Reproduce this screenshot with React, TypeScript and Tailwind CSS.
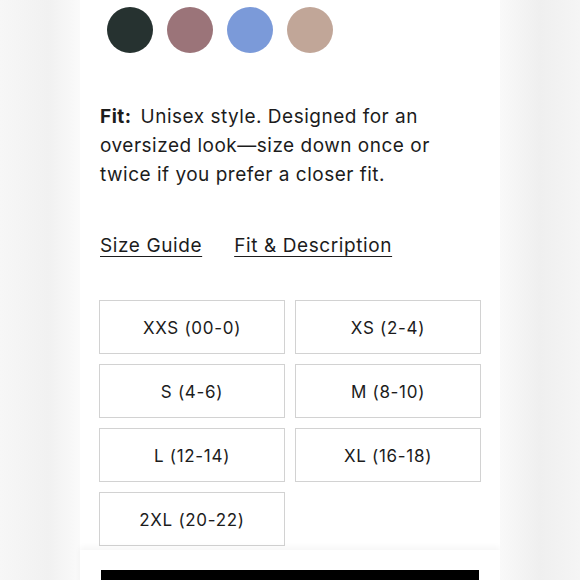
const swatches = ['#263230', '#9b7479', '#7b9ad9', '#c1a698'];

const sizes = ['XXS (00-0)', 'XS (2-4)', 'S (4-6)', 'M (8-10)', 'L (12-14)', 'XL (16-18)', '2XL (20-22)'];

export default function App() {
    return (
        <div
            className="flex h-[580px] w-[580px] overflow-hidden bg-[linear-gradient(180deg,#ffffff_0%,#f6f6f6_35%,#ebebeb_75%,#f3f3f3_100%)]"
            style={{ fontFamily: 'Inter, "Open Sans", sans-serif' }}
        >
            <div className="w-[80px] shrink-0 bg-[linear-gradient(90deg,#f7f7f7,#f1f1f1_60%,#fafafa)]" />

            {/* Center panel */}
            <div className="flex w-[420px] shrink-0 flex-col bg-white">
                <div className="flex flex-col px-[19px]">
                    {/* Colour swatches */}
                    <div className="flex gap-[14px] pl-[8px] pt-[7px]">
                        {swatches.map((c) => (
                            <div key={c} className="h-[46px] w-[46px] rounded-full" style={{ backgroundColor: c }} />
                        ))}
                    </div>

                    {/* Fit text */}
                    <p className="mt-[49px] max-w-[372px] pl-[1px] text-[19px] leading-[29px] tracking-[0.5px] text-[#1c1c1c]">
                        <span className="mr-[9px] font-bold">Fit:</span>Unisex style. Designed for an oversized look—size down once or twice if you prefer a closer fit.
                    </p>

                    {/* Links */}
                    <div className="mt-[42px] flex gap-[32px] pl-[1px] text-[19px] leading-[29px] tracking-[0.6px] text-[#1c1c1c]">
                        <a className="underline underline-offset-[4px]">Size Guide</a>
                        <a className="underline underline-offset-[4px]">Fit &amp; Description</a>
                    </div>

                    {/* Size grid */}
                    <div className="mt-[40px] grid grid-cols-2 gap-x-[10px] gap-y-[10px]">
                        {sizes.map((s) => (
                            <button
                                key={s}
                                className="flex h-[54px] items-center justify-center border-[1.5px] border-[#d2d2d2] bg-white pt-[3px] text-[17px] tracking-[0.7px] text-[#1c1c1c]"
                            >
                                {s}
                            </button>
                        ))}
                    </div>
                </div>

                {/* Sticky footer */}
                <div className="mt-[4px] flex-1 bg-white px-[21px] pt-[20px] shadow-[0_-3px_6px_rgba(0,0,0,0.04)]">
                    <div className="h-[40px] bg-black" />
                </div>
            </div>

            <div className="w-[80px] shrink-0 bg-[linear-gradient(90deg,#f9f9f9,#efefef_50%,#f5f5f5)]" />
        </div>
    );
}
